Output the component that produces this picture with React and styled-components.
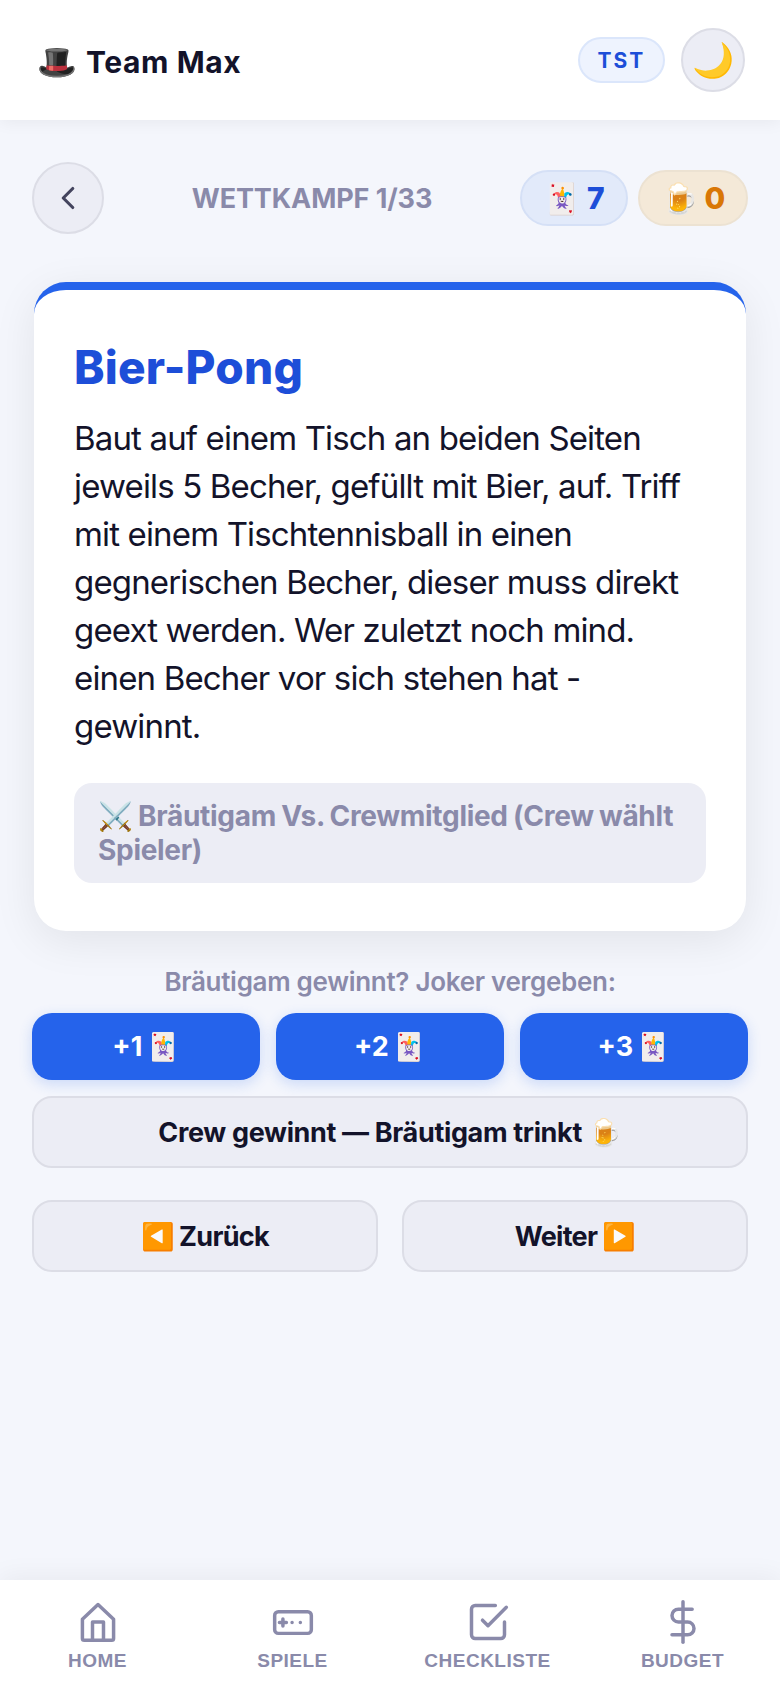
import React from "react";
import styled, { createGlobalStyle } from "styled-components";
import { ChevronLeft } from "lucide-react";

const FONT = `"Inter", "Noto Sans", sans-serif`;

const GlobalStyle = createGlobalStyle`
  html, body {
    margin: 0;
    padding: 0;
    background: #f4f6fc;
  }
  * {
    box-sizing: border-box;
  }
`;

const Page = styled.div`
  display: flex;
  flex-direction: column;
  width: 780px;
  height: 1688px;
  background: #f4f6fc;
  font-family: ${FONT};
  color: #13132a;
`;

const Header = styled.header`
  display: flex;
  align-items: center;
  justify-content: space-between;
  height: 120px;
  padding: 0 35px 0 37px;
  background: #fff;
  box-shadow: 0 2px 16px rgba(0, 0, 0, 0.06);
`;

const Brand = styled.div`
  display: flex;
  align-items: center;
  gap: 9px;
  padding-top: 3px;
  font-size: 30px;
  font-weight: 700;
  letter-spacing: 0.6px;
`;

const BrandEmoji = styled.span`
  font-size: 32px;
  letter-spacing: 0;
`;

const HeaderActions = styled.div`
  display: flex;
  align-items: center;
  gap: 16px;
`;

const CodePill = styled.div`
  display: flex;
  align-items: center;
  justify-content: center;
  width: 87px;
  height: 46px;
  border-radius: 23px;
  border: 2px solid #dbe6fb;
  background: #eef3fe;
  color: #1d4ed8;
  font-size: 21px;
  font-weight: 700;
  letter-spacing: 2px;
`;

const ThemeButton = styled.button`
  display: flex;
  align-items: center;
  justify-content: center;
  width: 64px;
  height: 64px;
  padding: 0;
  border-radius: 50%;
  border: 2px solid #dcdde6;
  background: #ecedf5;
  font-size: 34px;
`;

const Main = styled.main`
  flex: 1;
  display: flex;
  flex-direction: column;
  padding: 42px 32px 0;
`;

const TopRow = styled.div`
  display: grid;
  grid-template-columns: 72px 1fr auto;
  align-items: center;
  height: 72px;
`;

const BackButton = styled.button`
  display: flex;
  align-items: center;
  justify-content: center;
  width: 72px;
  height: 72px;
  padding: 0;
  border-radius: 50%;
  border: 2px solid #dcdde6;
  background: #ecedf5;
  color: #44445e;
`;

const Progress = styled.div`
  text-align: center;
  font-size: 27px;
  font-weight: 700;
  color: #8a8aaa;
  letter-spacing: -0.1px;
`;

const Chips = styled.div`
  display: flex;
  gap: 10px;
`;

const Chip = styled.div`
  display: flex;
  align-items: center;
  justify-content: center;
  gap: 8px;
  width: ${(p) => p.$width}px;
  height: 56px;
  border-radius: 28px;
  border: 2px solid ${(p) => p.$border};
  background: ${(p) => p.$bg};
  color: ${(p) => p.$color};
  font-size: 30px;
  font-weight: 800;
`;

const Card = styled.section`
  margin: 48px 2px 0;
  padding: 51px 40px 48px;
  background: #fff;
  border-top: 8px solid #2563eb;
  border-radius: 32px;
  box-shadow: 0 10px 44px rgba(0, 0, 0, 0.08);
`;

const Title = styled.h1`
  margin: 0 0 21px;
  font-size: 46px;
  line-height: 52px;
  font-weight: 800;
  letter-spacing: 0.2px;
  color: #1d4ed8;
`;

const Description = styled.p`
  margin: 0 0 33px;
  font-size: 33px;
  line-height: 48px;
  font-weight: 400;
  letter-spacing: -0.85px;
  color: #13132a;
`;

const Matchup = styled.div`
  padding: 16px 24px;
  border-radius: 18px;
  background: #ecedf5;
  color: #8a8aaa;
  font-size: 28px;
  line-height: 34px;
  font-weight: 700;
  letter-spacing: -0.3px;
  word-spacing: -1px;
`;

const Prompt = styled.div`
  margin-top: 34px;
  text-align: center;
  font-size: 26px;
  line-height: 34px;
  font-weight: 600;
  letter-spacing: -0.3px;
  color: #8a8aaa;
`;

const JokerRow = styled.div`
  display: grid;
  grid-template-columns: repeat(3, 1fr);
  gap: 16px;
  margin-top: 14px;
`;

const JokerButton = styled.button`
  height: 67px;
  border: none;
  border-radius: 20px;
  background: #2563eb;
  color: #fff;
  font-family: ${FONT};
  font-size: 27px;
  font-weight: 700;
  word-spacing: -3px;
  box-shadow: 0 4px 14px rgba(37, 99, 235, 0.2);
`;

const GhostButton = styled.button`
  width: 100%;
  height: 72px;
  border: 2px solid #dcdde6;
  border-radius: 20px;
  background: #ecedf5;
  color: #13132a;
  font-family: ${FONT};
  font-size: ${(p) => p.$size}px;
  font-weight: 700;
  letter-spacing: ${(p) => p.$tracking}px;
  word-spacing: ${(p) => p.$wordGap}px;
`;

const CrewRow = styled.div`
  margin-top: 16px;
`;

const NavRow = styled.div`
  display: grid;
  grid-template-columns: 1fr 1fr;
  gap: 24px;
  margin-top: 32px;
`;

const BottomNav = styled.nav`
  display: grid;
  grid-template-columns: repeat(4, 1fr);
  height: 108px;
  padding: 20px 0 0;
  background: #fff;
  box-shadow: 0 -4px 24px rgba(0, 0, 0, 0.05);
`;

const NavItem = styled.div`
  display: flex;
  flex-direction: column;
  align-items: center;
  gap: 5px;
  color: #8a8aaa;
`;

const NavLabel = styled.span`
  font-family: "Liberation Sans", Arial, sans-serif;
  font-size: 19px;
  line-height: 23px;
  font-weight: 700;
  letter-spacing: 0.5px;
`;

const NavIcon = styled.svg`
  display: block;
  width: 44px;
  height: 44px;
  fill: none;
  stroke: currentColor;
  stroke-width: 1.9;
  stroke-linecap: round;
  stroke-linejoin: round;
`;

function HomeIcon() {
  return (
    <NavIcon viewBox="0 0 24 24">
      <path d="M3.5 10.5 12 2.5l8.5 8V21a1 1 0 0 1-1 1h-15a1 1 0 0 1-1-1z" />
      <path d="M9 22v-10h6v10" />
    </NavIcon>
  );
}

function GameIcon() {
  return (
    <NavIcon viewBox="0 0 24 24">
      <rect x="2" y="6.4" width="20" height="11.8" rx="2" />
      <path d="M4.6 12.3h3.8M6.5 10.4v3.8M11.5 12.3h.01M16 12.3h.01" />
    </NavIcon>
  );
}

function CheckIcon() {
  return (
    <NavIcon viewBox="0 0 24 24">
      <path d="M9 11l3 3L22 4" />
      <path d="M21 12v7a2 2 0 0 1-2 2H5a2 2 0 0 1-2-2V5a2 2 0 0 1 2-2h11" />
    </NavIcon>
  );
}

function DollarIcon() {
  return (
    <NavIcon viewBox="0 0 24 24">
      <path d="M12 1v22" />
      <path d="M17 5H9.5a3.5 3.5 0 0 0 0 7h5a3.5 3.5 0 0 1 0 7H6" />
    </NavIcon>
  );
}

export default function App() {
  return (
    <>
      <GlobalStyle />
      <Page>
        <Header>
          <Brand>
            <BrandEmoji>🎩</BrandEmoji>
            Team Max
          </Brand>
          <HeaderActions>
            <CodePill>TST</CodePill>
            <ThemeButton>🌙</ThemeButton>
          </HeaderActions>
        </Header>
        <Main>
          <TopRow>
            <BackButton>
              <ChevronLeft size={38} strokeWidth={2} />
            </BackButton>
            <Progress>WETTKAMPF 1/33</Progress>
            <Chips>
              <Chip $width={108} $bg="#e2eafa" $border="#d5e0f6" $color="#1d4ed8">🃏 7</Chip>
              <Chip $width={110} $bg="#f4e9d8" $border="#ece2d2" $color="#d97706">🍺 0</Chip>
            </Chips>
          </TopRow>
          <Card>
            <Title>Bier-Pong</Title>
            <Description>
              Baut auf einem Tisch an beiden Seiten jeweils 5 Becher, gefüllt mit Bier, auf. Triff mit einem
              Tischtennisball in einen gegnerischen Becher, dieser muss direkt geext werden. Wer zuletzt noch
              mind. einen Becher vor sich stehen hat - gewinnt.
            </Description>
            <Matchup>⚔️ Bräutigam Vs. Crewmitglied (Crew wählt Spieler)</Matchup>
          </Card>
          <Prompt>Bräutigam gewinnt? Joker vergeben:</Prompt>
          <JokerRow>
            <JokerButton>+1 🃏</JokerButton>
            <JokerButton>+2 🃏</JokerButton>
            <JokerButton>+3 🃏</JokerButton>
          </JokerRow>
          <CrewRow>
            <GhostButton $size={27} $tracking={-0.35} $wordGap={0}>Crew gewinnt — Bräutigam trinkt 🍺</GhostButton>
          </CrewRow>
          <NavRow>
            <GhostButton $size={27} $tracking={-0.7} $wordGap={-1}>◀️ Zurück</GhostButton>
            <GhostButton $size={27} $tracking={-0.7} $wordGap={-1}>Weiter ▶️</GhostButton>
          </NavRow>
        </Main>
        <BottomNav>
          <NavItem><HomeIcon /><NavLabel>HOME</NavLabel></NavItem>
          <NavItem><GameIcon /><NavLabel>SPIELE</NavLabel></NavItem>
          <NavItem><CheckIcon /><NavLabel>CHECKLISTE</NavLabel></NavItem>
          <NavItem><DollarIcon /><NavLabel>BUDGET</NavLabel></NavItem>
        </BottomNav>
      </Page>
    </>
  );
}
